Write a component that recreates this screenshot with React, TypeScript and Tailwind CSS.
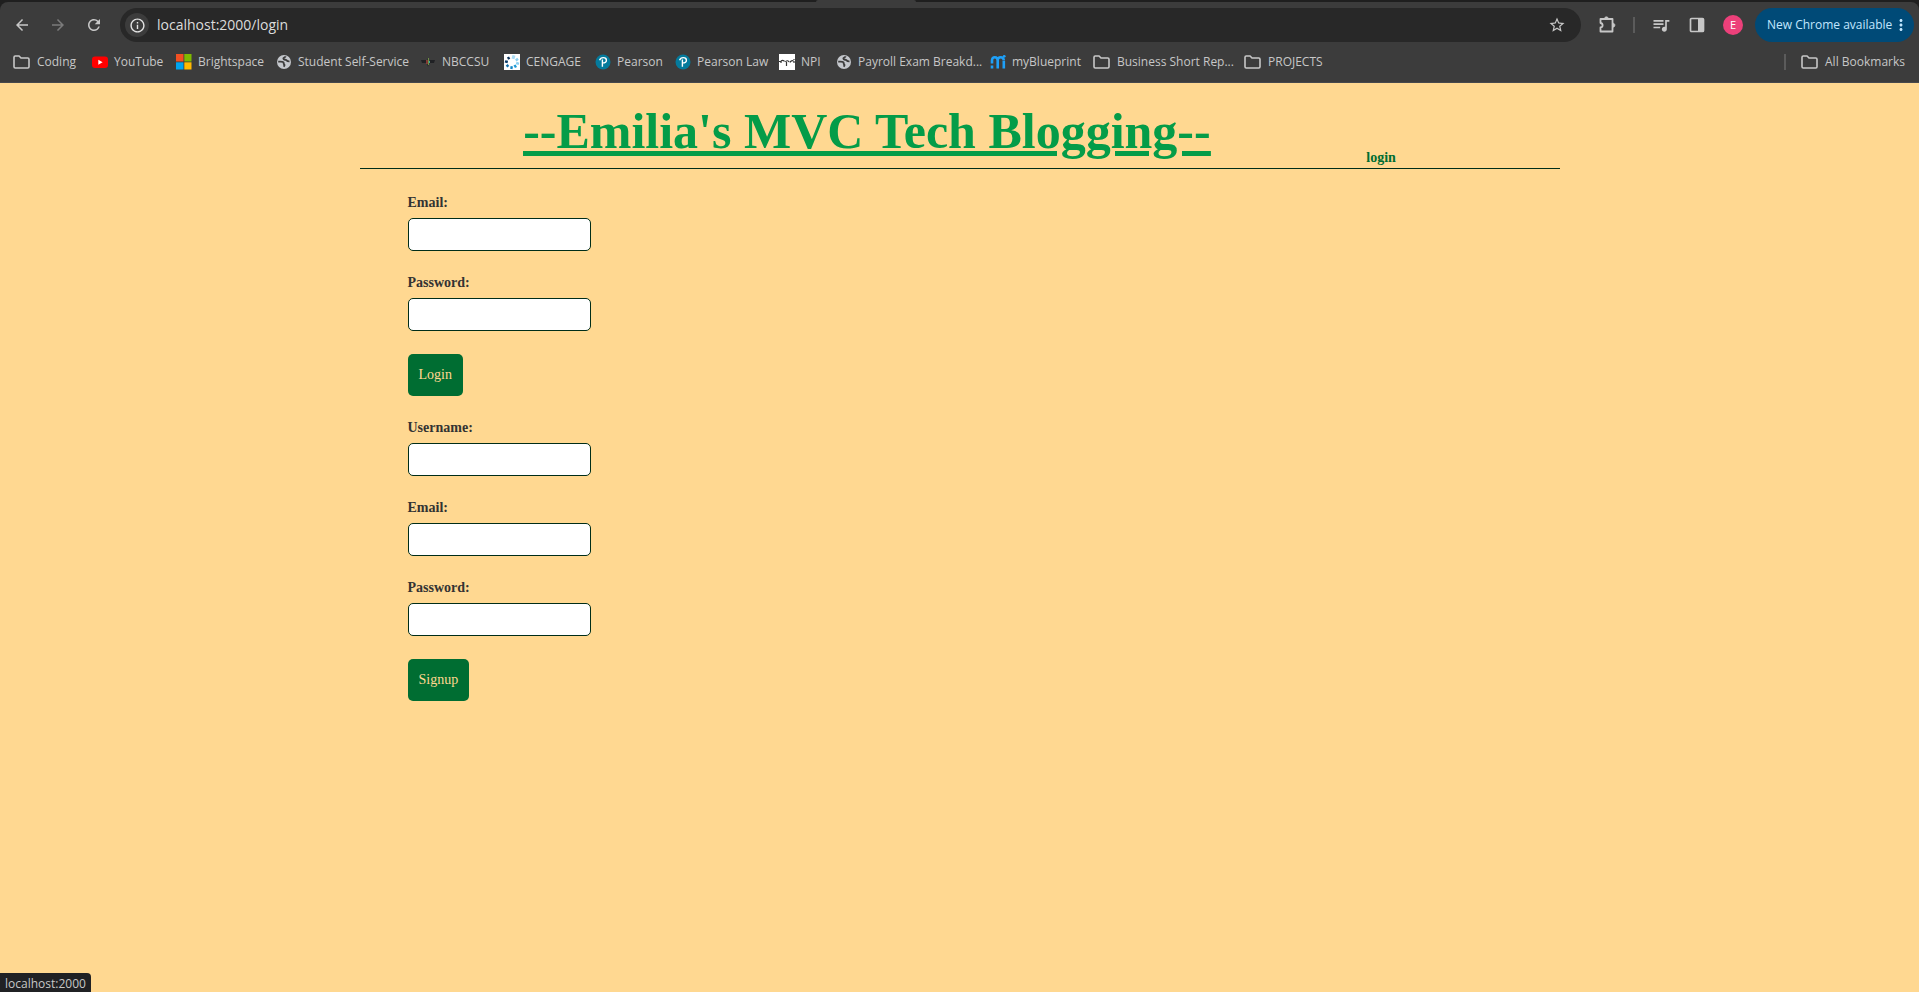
import { useId } from "react";
import type { ReactNode } from "react";
import {
  MdArrowBack,
  MdArrowForward,
  MdInfoOutline,
  MdMoreVert,
  MdQueueMusic,
  MdRefresh,
  MdStarOutline,
} from "react-icons/md";

const Folder = () => (
  <svg viewBox="0 0 17 16" className="h-4 w-[17px]" fill="none" stroke="#c7c7c7" strokeWidth="1.6" strokeLinejoin="round">
    <path d="M1 3.200c0-.7.500-1.200 1.200-1.200h3.900l1.900 2h6.800c.7 0 1.200.5 1.200 1.200v7.600c0 .7-.5 1.200-1.200 1.200H2.200c-.7 0-1.200-.5-1.200-1.200z" />
  </svg>
);

const YouTube = () => (
  <svg viewBox="0 0 16 16" className="size-4">
    <rect x="0" y="2.500" width="16" height="11.500" rx="3" fill="#f00" />
    <path d="M6.300 5.700v5L10.600 8.200z" fill="#fff" />
  </svg>
);

const Microsoft = () => (
  <svg viewBox="0 0 16 16" className="size-4">
    <path d="M0 0h7.500v7.500H0z" fill="#f25022" />
    <path d="M8.300 0h7.200v7.500H8.300z" fill="#7fba00" />
    <path d="M0 8.300h7.500v7.200H0z" fill="#00a4ef" />
    <path d="M8.300 8.300h7.200v7.200H8.300z" fill="#ffb900" />
  </svg>
);

const Globe = () => (
  <svg viewBox="0 0 16 16" className="size-4">
    <circle cx="8" cy="8" r="7" fill="#c4c7cc" />
    <path
      d="M2.200 7.600c1.600.1 4-.4 5 .6.900.9.200 1.700 1 2.300.5.400.3 1.300-.6 2.100M9.800 2.400c-.5.900-2.600 1-2.400 2.300.2 1.200 2.200.8 2.900 1.500.6.700 1.500 1.300 3.200 1.200"
      fill="none"
      stroke="#3c3c3c"
      strokeWidth="1.900"
    />
  </svg>
);

const Nbccsu = () => (
  <svg viewBox="0 0 16 16" className="size-4">
    <path d="M1 6h5v3H2zM10 6h5l-1 3h-4z" fill="#202124" />
    <path d="M8 4l2 4-2 5-2-5z" fill="#2b2b2b" />
    <path d="M7 6v4" stroke="#d0453a" />
    <path d="M8.500 4v7" stroke="#6f8f45" />
    <path d="M9.500 7v2" stroke="#35a9a2" />
  </svg>
);

const Cengage = () => (
  <svg viewBox="0 0 16 16" className="size-4">
    <path d="M0 0h16v16H0z" fill="#fff" />
    <g fill="none" strokeWidth="2.400">
      <path d="M9 4.800l1-3.500" stroke="#a8dcf5" strokeWidth="3" />
      <path d="M11.800 6.500l2.200-1.700" stroke="#8ccff0" />
      <path d="M12.200 9l2.800.8" stroke="#8ccff0" />
      <path d="M10.500 11l1.500 2.500" stroke="#1d9ad6" />
      <path d="M7.800 12.300l-.5 2.700" stroke="#1486c6" />
      <path d="M4.500 11L2.500 12.500" stroke="#0b6aa8" />
      <path d="M3.800 8L1 7.300" stroke="#0a3a68" />
      <path d="M5.200 5.200L4 3" stroke="#0a2f57" />
    </g>
  </svg>
);

const Pearson = () => (
  <svg viewBox="0 0 16 16" className="size-4">
    <circle cx="8" cy="8" r="7.500" fill="#047a9c" />
    <path
      d="M7.400 12.800V5.400M4.600 6.200c.5-1.600 2-2.600 3.700-2.600 1.800 0 3.100 1 3.100 2.600S10 8.900 7.700 8.900"
      fill="none"
      stroke="#fff"
      strokeWidth="1.400"
    />
  </svg>
);

const Npi = () => (
  <svg viewBox="0 0 16 16" className="size-4">
    <path d="M0 0h16v16H0z" fill="#fff" />
    <path
      d="M0 7.500h2M2 9V7.500c0-1.500 3-1.500 3.500 0M6.500 8c.5-1.500 3-1.800 3.500 0M7.500 8v4M11 8.500c.5-2 2.500-2 3.500-1.500M15 7v2M15 5v1"
      fill="none"
      stroke="#333"
      strokeWidth="1.200"
    />
  </svg>
);

const MyBlueprint = () => (
  <svg viewBox="0 0 16 16" className="size-4">
    <g fill="none" stroke="#1ea0f8" strokeWidth="2.600">
      <path d="M2 9.500V6.500c0-2 1-3.200 2.800-3.200S7.700 4.500 7.700 6.500v3.500M7.700 6.500c0-2 1-3.200 3-3.200 1.800 0 3.100 1.200 3.100 3.200" />
      <path d="M13.800 7v7.500M2 11.500v3M7.700 10v4.500" />
    </g>
    <circle cx="14.200" cy="2.300" r="1.400" fill="#1ea0f8" />
  </svg>
);

const bookmarks: { label: string; icon: ReactNode; box: string }[] = [
  { label: "Coding", icon: <Folder />, box: "w-[79px] gap-[7px]" },
  { label: "YouTube", icon: <YouTube />, box: "w-[84px] gap-1.5" },
  { label: "Brightspace", icon: <Microsoft />, box: "w-[100px] gap-1.5" },
  { label: "Student Self-Service", icon: <Globe />, box: "w-[144px] gap-1.5" },
  { label: "NBCCSU", icon: <Nbccsu />, box: "w-[84px] gap-1.5" },
  { label: "CENGAGE", icon: <Cengage />, box: "w-[91px] gap-1.5" },
  { label: "Pearson", icon: <Pearson />, box: "w-[80px] gap-1.5" },
  { label: "Pearson Law", icon: <Pearson />, box: "w-[104px] gap-1.5" },
  { label: "NPI", icon: <Npi />, box: "w-[57px] gap-1.5" },
  { label: "Payroll Exam Breakd...", icon: <Globe />, box: "w-[154px] gap-1.5" },
  { label: "myBlueprint", icon: <MyBlueprint />, box: "w-[103px] gap-1.5" },
  { label: "Business Short Rep...", icon: <Folder />, box: "w-[151px] gap-[7px]" },
  { label: "PROJECTS", icon: <Folder />, box: "w-[80px] gap-[7px]" },
];

function BrowserChrome() {
  return (
    <div className="bg-[#1f1f1f] font-['Open_Sans',sans-serif]">
      <div className="flex h-0.5 justify-center">
        <div className="mr-[188px] w-[100px] rounded-t-sm bg-[#3c3c3c]" />
      </div>
      <div className="rounded-t-lg border-b border-[#47484c] bg-[#3c3c3c] pt-1.5">
        <div className="flex h-[34px] items-center pr-[5px] pl-3">
          <div className="flex gap-4 text-[#c7c7c7]">
            <button aria-label="Back" className="size-5"><MdArrowBack className="mx-auto size-[18px]" /></button>
            <button aria-label="Forward" disabled className="size-5 text-[#7b7b7b]"><MdArrowForward className="mx-auto size-[18px]" /></button>
            <button aria-label="Reload" className="size-5"><MdRefresh className="mx-auto size-[18px]" /></button>
          </div>
          <div className="ml-4 flex h-full flex-1 items-center rounded-full bg-[#282828] pr-[15px] pl-[5px]">
            <button aria-label="Site information" className="grid size-6 place-items-center rounded-full bg-[#3c3c3c] text-[#e3e3e3]">
              <MdInfoOutline className="size-[17px]" />
            </button>
            <input
              aria-label="Address"
              defaultValue="localhost:2000/login"
              className="ml-2 min-w-0 flex-1 bg-transparent text-sm text-[#dcdcdc] outline-none"
            />
            <button aria-label="Bookmark this tab" className="text-[#c7c7c7]"><MdStarOutline className="size-[18px]" /></button>
          </div>
          <div className="ml-[18px] flex items-center text-[#c7c7c7]">
            <button aria-label="Extensions" className="size-[18px]">
              <svg viewBox="0 0 18 18" className="size-[18px]" fill="none" stroke="currentColor" strokeWidth="1.800" strokeLinejoin="round">
                <path d="M1.500 3h12v12.500h-12v-4c2.800-.4 2.800-4.100 0-4.500z" />
                <path d="M5.500 2.500c0-2.200 3.800-2.200 3.800 0zM14 7.200c2.600 0 2.600 4 0 4z" fill="currentColor" strokeWidth="0.600" />
              </svg>
            </button>
            <div className="ml-4 h-4 w-0.5 bg-[#5b5b5b]" />
            <button aria-label="Media" className="ml-4"><MdQueueMusic className="size-5" /></button>
            <button aria-label="Side panel" className="ml-[18px]">
              <svg viewBox="0 0 16 16" className="size-4">
                <rect x="1.500" y="1.500" width="13" height="13" rx="1" fill="none" stroke="currentColor" strokeWidth="1.700" />
                <path d="M9 1.500h5.500v13H9z" fill="currentColor" />
              </svg>
            </button>
            <button aria-label="Profile" className="ml-[18px] size-5 rounded-full bg-[#ec407a] text-[11px] leading-5 text-white">E</button>
            <button className="ml-3 flex h-[34px] w-[159px] items-center justify-between rounded-full bg-[#004a77] pr-1.5 pl-3 text-xs whitespace-nowrap text-[#c2e7ff]">
              New Chrome available
              <MdMoreVert className="size-[18px] shrink-0" />
            </button>
          </div>
        </div>
        <nav aria-label="Bookmarks" className="flex h-10 items-center pr-3.5 pl-[13px] text-xs text-[#c7c7c7]">
          {bookmarks.map((b) => (
            <a key={b.label} href="#" className={`flex shrink-0 items-center whitespace-nowrap ${b.box}`}>
              <span className="shrink-0">{b.icon}</span>
              {b.label}
            </a>
          ))}
          <a href="#" className="ml-auto flex items-center gap-[7px] border-l-2 border-[#5b5b5b] pl-[15px] leading-4 whitespace-nowrap">
            <Folder />
            All Bookmarks
          </a>
        </nav>
      </div>
    </div>
  );
}

function Field({ label, type }: { label: string; type: string }) {
  const id = useId();
  return (
    <div className="flex flex-col items-start gap-1.5 pb-[23px]">
      <label htmlFor={id} className="leading-[18px] font-bold text-[#333]">{label}</label>
      <input id={id} type={type} className="h-[33px] w-[183px] rounded-[5px] border border-[#002d18] bg-white px-2 outline-none" />
    </div>
  );
}

function Submit({ children }: { children: ReactNode }) {
  return (
    <button type="submit" className="h-[42px] rounded-[5px] bg-[#006d32] px-[11px] text-[#ffd891]">{children}</button>
  );
}

export default function App() {
  return (
    <div className="min-h-screen bg-[#ffd891]">
      <BrowserChrome />
      <div className="mx-auto max-w-[1200px] font-['Liberation_Serif',serif] text-sm">
        <header className="flex items-end justify-evenly border-b border-[#002d18] pt-[18px]">
          <h1 className="pb-[7px] pl-2 text-[50px] leading-[60px] font-bold text-[#049c48] underline">
            <a href="#">--Emilia's MVC Tech Blogging--</a>
          </h1>
          <a href="#" className="pr-2 leading-5 font-bold text-[#006d32]">login</a>
        </header>
        <main className="px-12 pt-[25px]">
          <form className="pb-[23px]">
            <Field label="Email:" type="email" />
            <Field label="Password:" type="password" />
            <Submit>Login</Submit>
          </form>
          <form>
            <Field label="Username:" type="text" />
            <Field label="Email:" type="email" />
            <Field label="Password:" type="password" />
            <Submit>Signup</Submit>
          </form>
        </main>
      </div>
      <div className="fixed bottom-0 left-0 h-[19px] rounded-tr bg-[#202124] px-[5px] font-['Open_Sans',sans-serif] text-xs leading-[21px] text-[#c7c7c7]">
        localhost:2000
      </div>
    </div>
  );
}
